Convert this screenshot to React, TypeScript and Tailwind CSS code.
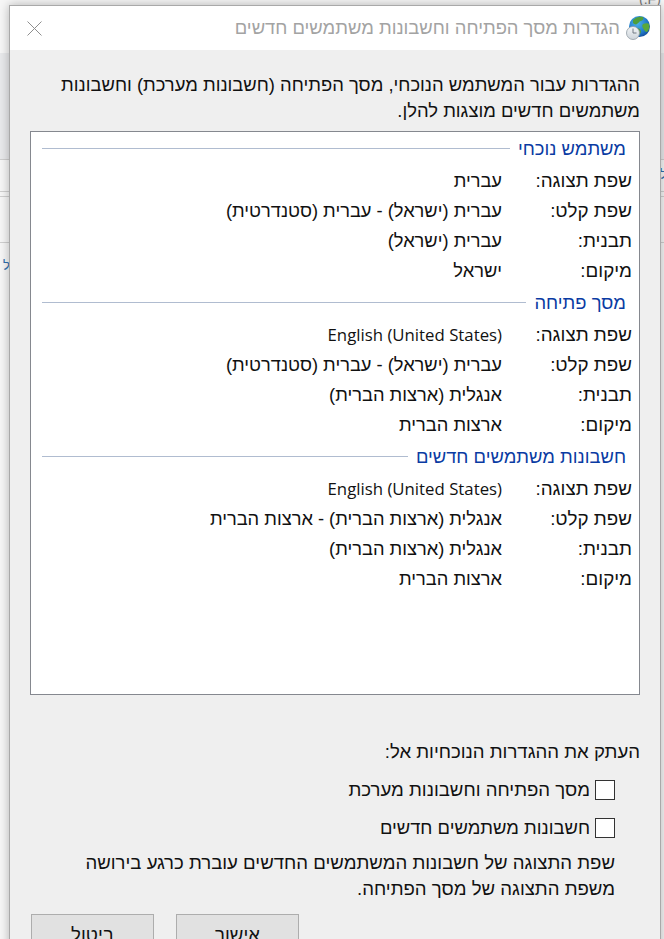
const sections = [
  {
    title: 'משתמש נוכחי',
    rows: [
      ['שפת תצוגה:', 'עברית'],
      ['שפת קלט:', 'עברית (ישראל) - עברית (סטנדרטית)'],
      ['תבנית:', 'עברית (ישראל)'],
      ['מיקום:', 'ישראל'],
    ],
  },
  {
    title: 'מסך פתיחה',
    rows: [
      ['שפת תצוגה:', 'English (United States)'],
      ['שפת קלט:', 'עברית (ישראל) - עברית (סטנדרטית)'],
      ['תבנית:', 'אנגלית (ארצות הברית)'],
      ['מיקום:', 'ארצות הברית'],
    ],
  },
  {
    title: 'חשבונות משתמשים חדשים',
    rows: [
      ['שפת תצוגה:', 'English (United States)'],
      ['שפת קלט:', 'אנגלית (ארצות הברית) - ארצות הברית'],
      ['תבנית:', 'אנגלית (ארצות הברית)'],
      ['מיקום:', 'ארצות הברית'],
    ],
  },
];

const GlobeClock = () => (
  <svg width="24" height="24" viewBox="0 0 24 24" className="shrink-0">
    <defs>
      <radialGradient id="globe" cx="0.4" cy="0.35" r="0.75">
        <stop offset="0" stopColor="#4db4ea" />
        <stop offset="0.65" stopColor="#1f78c8" />
        <stop offset="1" stopColor="#123f8c" />
      </radialGradient>
      <linearGradient id="clock" x1="0" y1="0" x2="0" y2="1">
        <stop offset="0" stopColor="#f4f6f8" />
        <stop offset="1" stopColor="#cdd4da" />
      </linearGradient>
    </defs>
    <circle cx="13.500" cy="10.500" r="10.500" fill="url(#globe)" />
    <path d="M7 4c3-3 7-4 10-3 1 2 0 3-2 4-2 0-2 2-4 3-1 1-3 0-4-1z" fill="#4f9f3a" />
    <path d="M17 8c2-1 5-1 6 0 1 3 0 6-2 8-2 0-3-2-4-4-1-1-1-3 0-4z" fill="#5aa83c" />
    <path d="M11 12c2 0 3 1 4 3 0 2-1 3-2 4-1-2-3-4-2-7z" fill="#4f9f3a" />
    <circle cx="7" cy="17" r="6.500" fill="url(#clock)" stroke="#8f9aa3" strokeWidth="0.800" />
    <path d="M7 12.500V17h3.500" fill="none" stroke="#66707a" strokeWidth="0.900" />
  </svg>
);

const Checkbox = () => <span className="block h-5 w-5 shrink-0 border border-[#333333] bg-white" />;

export default function App() {
  return (
    <div
      dir="rtl"
      className="relative h-[939px] w-[664px] overflow-hidden bg-[#f7f7f7] text-[18.6px] text-[#111111]"
      style={{ fontFamily: '"Liberation Sans", "Noto Sans", sans-serif' }}
    >
      {/* window behind the dialog, only slivers of it show */}
      <div className="flex flex-col">
        <div className="h-[53px] bg-[#f7f7f7]" />
        <div className="h-[107px] border-b border-[#cfcfcf] bg-[#e9eaec]" />
        <div className="h-[32px] border-b border-[#d0d0d0]" />
        <div className="h-[5px] border-b border-[#d0d0d0]" />
        <div className="h-[46px] border-b border-[#d0d0d0]" />
      </div>
      <span className="absolute top-[-9px] left-[639px] text-[14px] leading-[16px] text-[#777777]">(F:)</span>
      <span className="absolute top-[167px] left-[660px] text-[13px] leading-[16px] text-[#2f6fb0]">ל</span>
      <span className="absolute top-[258px] left-[3px] text-[13px] leading-[16px] text-[#2f6fb0]">ל</span>

      <div className="absolute top-[5px] left-[9px] h-[960px] w-[652px] border border-[#a9a9a9] bg-[#efefef] shadow-[0_0_10px_rgba(0,0,0,0.28)]">
        <header className="flex h-[44px] items-center bg-white pr-[10px] pl-[17px]">
          <GlobeClock />
          <h1 className="mr-[6px] text-[18.4px] text-[#a3a3a3]">הגדרות מסך הפתיחה וחשבונות משתמשים חדשים</h1>
          <svg width="15" height="15" viewBox="0 0 15 15" className="mr-auto">
            <path d="M0.500 0.500l14 14M14.500 0.500l-14 14" stroke="#8e8e8e" strokeWidth="1" fill="none" />
          </svg>
        </header>

        <div className="px-[20px]">
          <p className="mt-[22px] h-[59px] text-[18.4px] leading-[26px]">
            ההגדרות עבור המשתמש הנוכחי, מסך הפתיחה (חשבונות מערכת) וחשבונות משתמשים חדשים מוצגות להלן.
          </p>

          <div className="h-[564px] border border-[#85888f] bg-white pt-[2px]">
            {sections.map((section) => (
              <section key={section.title} className="mb-[3px]">
                <div className="mb-[3px] flex h-[28px] items-center pr-[13px] pl-[11px]">
                  <h2 className="pt-[1px] text-[18.4px] leading-[24px] text-[#0a3ba3]">{section.title}</h2>
                  <div className="mr-[8px] h-px flex-1 bg-[#b0bcd0]" />
                </div>
                {section.rows.map(([label, value]) => (
                  <div key={label} className="flex h-[30px] items-center pt-[1px] pr-[7px] text-[18.3px] leading-[24px]">
                    <span className="w-[130px] shrink-0 text-[18.8px]">{label}</span>
                    {value.startsWith('English') ? (
                      <span className="text-[16.8px]" style={{ fontFamily: '"Open Sans", sans-serif' }}>
                        {value}
                      </span>
                    ) : (
                      <span>{value}</span>
                    )}
                  </div>
                ))}
              </section>
            ))}
          </div>

          <p className="mt-[45px] leading-[24px]">העתק את ההגדרות הנוכחיות אל:</p>
          <div className="mt-[16px] flex items-center pr-[25px] leading-[20px]">
            <Checkbox />
            <span className="mr-[5px]">מסך הפתיחה וחשבונות מערכת</span>
          </div>
          <div className="mt-[18px] flex items-center pr-[25px] leading-[20px]">
            <Checkbox />
            <span className="mr-[5px] text-[18.4px]">חשבונות משתמשים חדשים</span>
          </div>
          <p className="mt-[12px] pr-[25px] pl-[50px] leading-[26px]">
            שפת התצוגה של חשבונות המשתמשים החדשים עוברת כרגע בירושה משפת התצוגה של מסך הפתיחה.
          </p>

          <div className="mt-[12px] flex gap-[22px] pr-[341px]">
            <button className="h-[50px] w-[123px] border border-[#adadad] bg-[#e1e1e1] pb-[8px] leading-[24px]">אישור</button>
            <button className="h-[50px] w-[123px] border border-[#adadad] bg-[#e1e1e1] pb-[8px] leading-[24px]">ביטול</button>
          </div>
        </div>
      </div>
    </div>
  );
}
